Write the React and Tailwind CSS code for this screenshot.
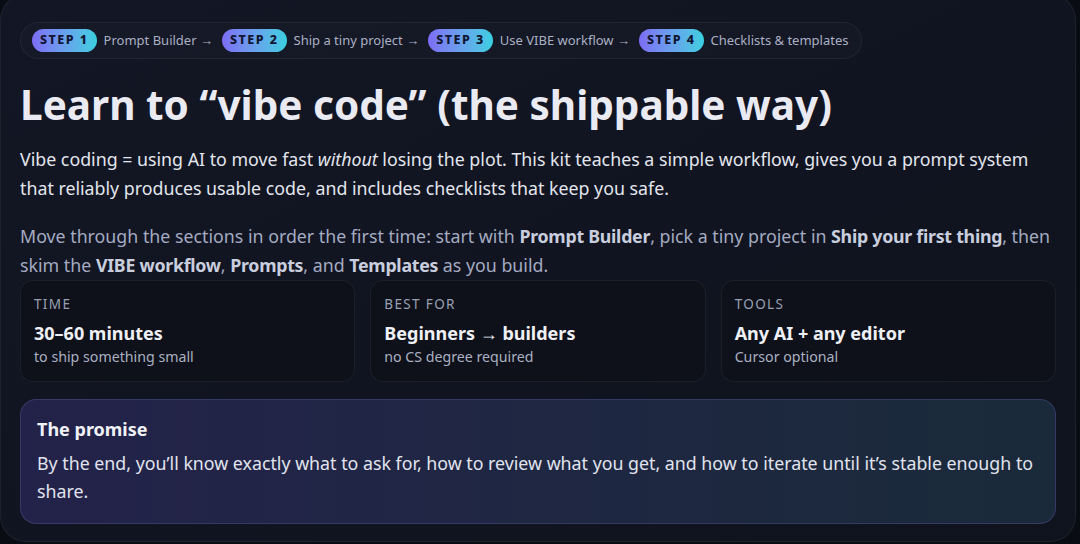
import React from 'react';

const steps = [
  { n: 1, label: 'Prompt Builder' },
  { n: 2, label: 'Ship a tiny project' },
  { n: 3, label: 'Use VIBE workflow' },
  { n: 4, label: 'Checklists & templates' },
];

const facts = [
  { label: 'TIME', value: '30–60 minutes', sub: 'to ship something small' },
  { label: 'BEST FOR', value: 'Beginners → builders', sub: 'no CS degree required' },
  { label: 'TOOLS', value: 'Any AI + any editor', sub: 'Cursor optional' },
];

export default function App() {
  return (
    <div className="h-[544px] w-[1080px] overflow-hidden bg-[#0a0c13] pr-[4px] font-['Noto_Sans',sans-serif]">
      <div className="-mt-[6px] h-[548px] rounded-[26px] border border-white/[0.06] bg-gradient-to-br from-[#131624] to-[#0f131d] px-[19px] pt-[27px]">
        {/* Steps */}
        <div className="inline-flex h-[37px] items-center rounded-full border border-white/[0.06] bg-white/[0.015] pl-[11px] pr-[12px]">
          {steps.map((s, i) => (
            <React.Fragment key={s.n}>
              <span className={`rounded-full bg-gradient-to-r from-[#7c6cf5] to-[#38cfe0] px-[8px] py-[2px] text-[12.5px] font-extrabold tracking-[0.12em] text-[#111633] ${i > 0 ? 'ml-[9px]' : ''}`}>
                STEP {s.n}
              </span>
              <span className="ml-[7px] text-[13px] text-[#aab0c4]">
                {s.label}
                {i < steps.length - 1 && ' →'}
              </span>
            </React.Fragment>
          ))}
        </div>

        <h1 className="mt-[18px] text-[40.5px] font-bold leading-[56px] text-[#e9eaf2]">
          Learn to “vibe code” (the shippable way)
        </h1>

        <p className="mt-[12px] text-[17.8px] leading-[29px] text-[#e3e6ee]">
          Vibe coding = using AI to move fast <em>without</em> losing the plot. This kit teaches a simple workflow, gives you a prompt system that reliably produces usable code, and includes checklists that keep you safe.
        </p>

        <p className="mt-[19px] text-[17.8px] leading-[29px] text-[#a4abc2]">
          Move through the sections in order the first time: start with <b className="tracking-[-0.015em] text-[#c9cede]">Prompt Builder</b>, pick a tiny project in <b className="tracking-[-0.015em] text-[#c9cede]">Ship your first thing</b>, then skim the <b className="tracking-[-0.015em] text-[#c9cede]">VIBE workflow</b>, <b className="tracking-[-0.015em] text-[#c9cede]">Prompts</b>, and <b className="tracking-[-0.015em] text-[#c9cede]">Templates</b> as you build.
        </p>

        <div className="mt-0 grid grid-cols-3 gap-[15px]">
          {facts.map((f) => (
            <div key={f.label} className="h-[102px] rounded-[13px] border border-white/[0.06] bg-[#0e111a] px-[13px] pt-[13px]">
              <div className="text-[13.5px] tracking-[0.1em] text-[#9aa0b3]">{f.label}</div>
              <div className="mt-[6px] text-[18px] font-bold leading-[26px] text-[#eef0f6]">{f.value}</div>
              <div className="mt-[1px] text-[14.2px] leading-[20px] text-[#aab0c2]">{f.sub}</div>
            </div>
          ))}
        </div>

        <div className="mt-[17px] h-[125px] rounded-[16px] border border-[#3b3f6e]/80 bg-gradient-to-r from-[#23224a] to-[#1a2a3a] px-[16px] pt-[17px]">
          <div className="text-[18px] font-bold leading-[24px] text-[#f1f2f8]">The promise</div>
          <p className="mt-[8px] text-[17.8px] leading-[28px] text-[#e1e4ee]">
            By the end, you’ll know exactly what to ask for, how to review what you get, and how to iterate until it’s stable enough to share.
          </p>
        </div>
      </div>
    </div>
  );
}
